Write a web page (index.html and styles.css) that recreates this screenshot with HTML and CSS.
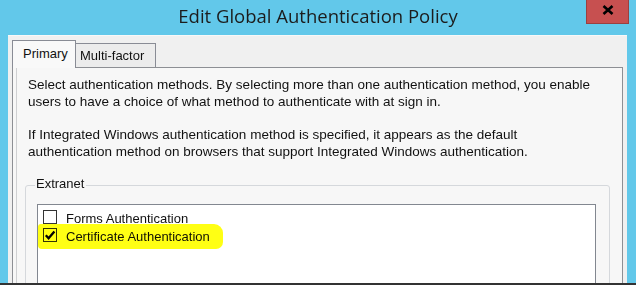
FILE: index.html
```html
<!DOCTYPE html>
<html lang="en">
<head>
  <meta charset="UTF-8">
  <title>Edit Global Authentication Policy</title>
  <link rel="stylesheet" href="styles.css">
</head>
<body>
  <div class="shot">
    <div class="titlebar">
      <span></span>
      <div class="title">Edit Global Authentication Policy</div>
      <button class="close" type="button">
        <svg width="12" height="10" viewBox="0 0 12 10">
          <path d="M1.5 1 L10.5 9 M10.5 1 L1.5 9" stroke="#000" stroke-width="2.6" fill="none"/>
        </svg>
      </button>
    </div>

    <div class="client">
      <div class="tabs">
        <div class="tab tab-on">Primary</div>
        <div class="tab tab-off">Multi-factor</div>
      </div>

      <div class="panel">
        <div class="page">
          <p>Select authentication methods. By selecting more than one authentication method, you enable<br>users to have a choice of what method to authenticate with at sign in.</p>
          <p>If Integrated Windows authentication method is specified, it appears as the default<br>authentication method on browsers that support Integrated Windows authentication.</p>

          <fieldset class="group">
            <legend>Extranet</legend>
            <div class="listbox">
              <label class="item">
                <span class="check"></span>
                Forms Authentication
              </label>
              <label class="item marked">
                <span class="check">
                  <svg width="12" height="12" viewBox="0 0 12 12">
                    <path d="M1.8 6.2 L4.6 9.2 L10.4 2.4" stroke="#000" stroke-width="2.3" fill="none"/>
                  </svg>
                </span>
                Certificate Authentication
              </label>
            </div>
          </fieldset>
        </div>
      </div>
    </div>
  </div>
</body>
</html>
```

FILE: styles.css
```css
* {
  box-sizing: border-box;
}
body {
  margin: 0;
  background: #fff;
  font-family: 'Liberation Sans', Arial, sans-serif;
  font-size: 13px;
  line-height: 17px;
  color: #111;
}
.shot {
  width: 636px;
  height: 285px;
  background: #62c8ea;
  border-bottom: 2px solid #333;
  overflow: hidden;
  display: flex;
  flex-direction: column;
}
.titlebar {
  height: 35px;
  flex-shrink: 0;
  display: grid;
  grid-template-columns: 1fr auto 1fr;
  align-items: start;
}
.title {
  padding-top: 4px;
  font-family: 'Open Sans', sans-serif;
  font-size: 18.5px;
  line-height: 24px;
  color: #1c1c1c;
  white-space: nowrap;
}
.close {
  justify-self: end;
  margin-right: 7px;
  width: 43px;
  height: 24px;
  padding: 0 0 4px;
  border: 1px solid #9a4040;
  border-top: none;
  background: #c75050;
  display: flex;
  align-items: center;
  justify-content: center;
}
.client {
  flex: 1;
  margin: 0 9px 0 8px;
  padding: 0 4px;
  background: #f0f0f0;
  border-top: 1px solid #f8f8f8;
  display: flex;
  flex-direction: column;
}
.tabs {
  display: flex;
  align-items: flex-end;
  padding-top: 4px;
}
.tab {
  border: 1px solid #898c95;
  border-bottom: none;
  white-space: nowrap;
}
.tab-on {
  position: relative;
  z-index: 1;
  width: 64px;
  height: 28px;
  margin-bottom: -1px;
  padding: 4px 0 0 10px;
  background: #f9f9f9;
}
.tab-off {
  width: 80px;
  height: 24px;
  border-left: none;
  padding: 3px 0 0 4px;
  background: #ececec;
}
.panel {
  flex: 1;
  border: 1px solid #8d8f94;
  background: #f7f7f7;
  padding-left: 3px;
}
.page {
  height: 100%;
  border-left: 1px solid #cfd0d2;
  padding: 8px 12px 0 8px;
}
.page p {
  margin: 0 0 16px;
  padding-left: 3px;
  font-size: 13.5px;
  white-space: nowrap;
}
.group {
  margin: 1px 0 0;
  padding: 0 13px 0 11px;
  border: 1px solid #d5d8dc;
  border-radius: 3px;
}
.group legend {
  margin-left: -2px;
  padding: 0 2px 3px 1px;
  line-height: 15px;
}
.listbox {
  margin-top: 10px;
  height: 120px;
  background: #fff;
  border: 1px solid #828790;
  padding: 4px 5px;
}
.item {
  display: flex;
  align-items: center;
  gap: 9px;
  height: 18px;
  white-space: nowrap;
}
.check {
  width: 14px;
  height: 14px;
  margin-top: -3px;
  border: 1px solid #333;
  background: #fff;
  display: flex;
  align-items: center;
  justify-content: center;
}
.marked {
  position: relative;
}
/* yellow marker drawn over the row */
.marked::after {
  content: "";
  position: absolute;
  left: -5px;
  top: -3px;
  width: 185px;
  height: 25px;
  background: #ffff14;
  border-radius: 3px 9px 7px 4px;
  mix-blend-mode: multiply;
}
```
